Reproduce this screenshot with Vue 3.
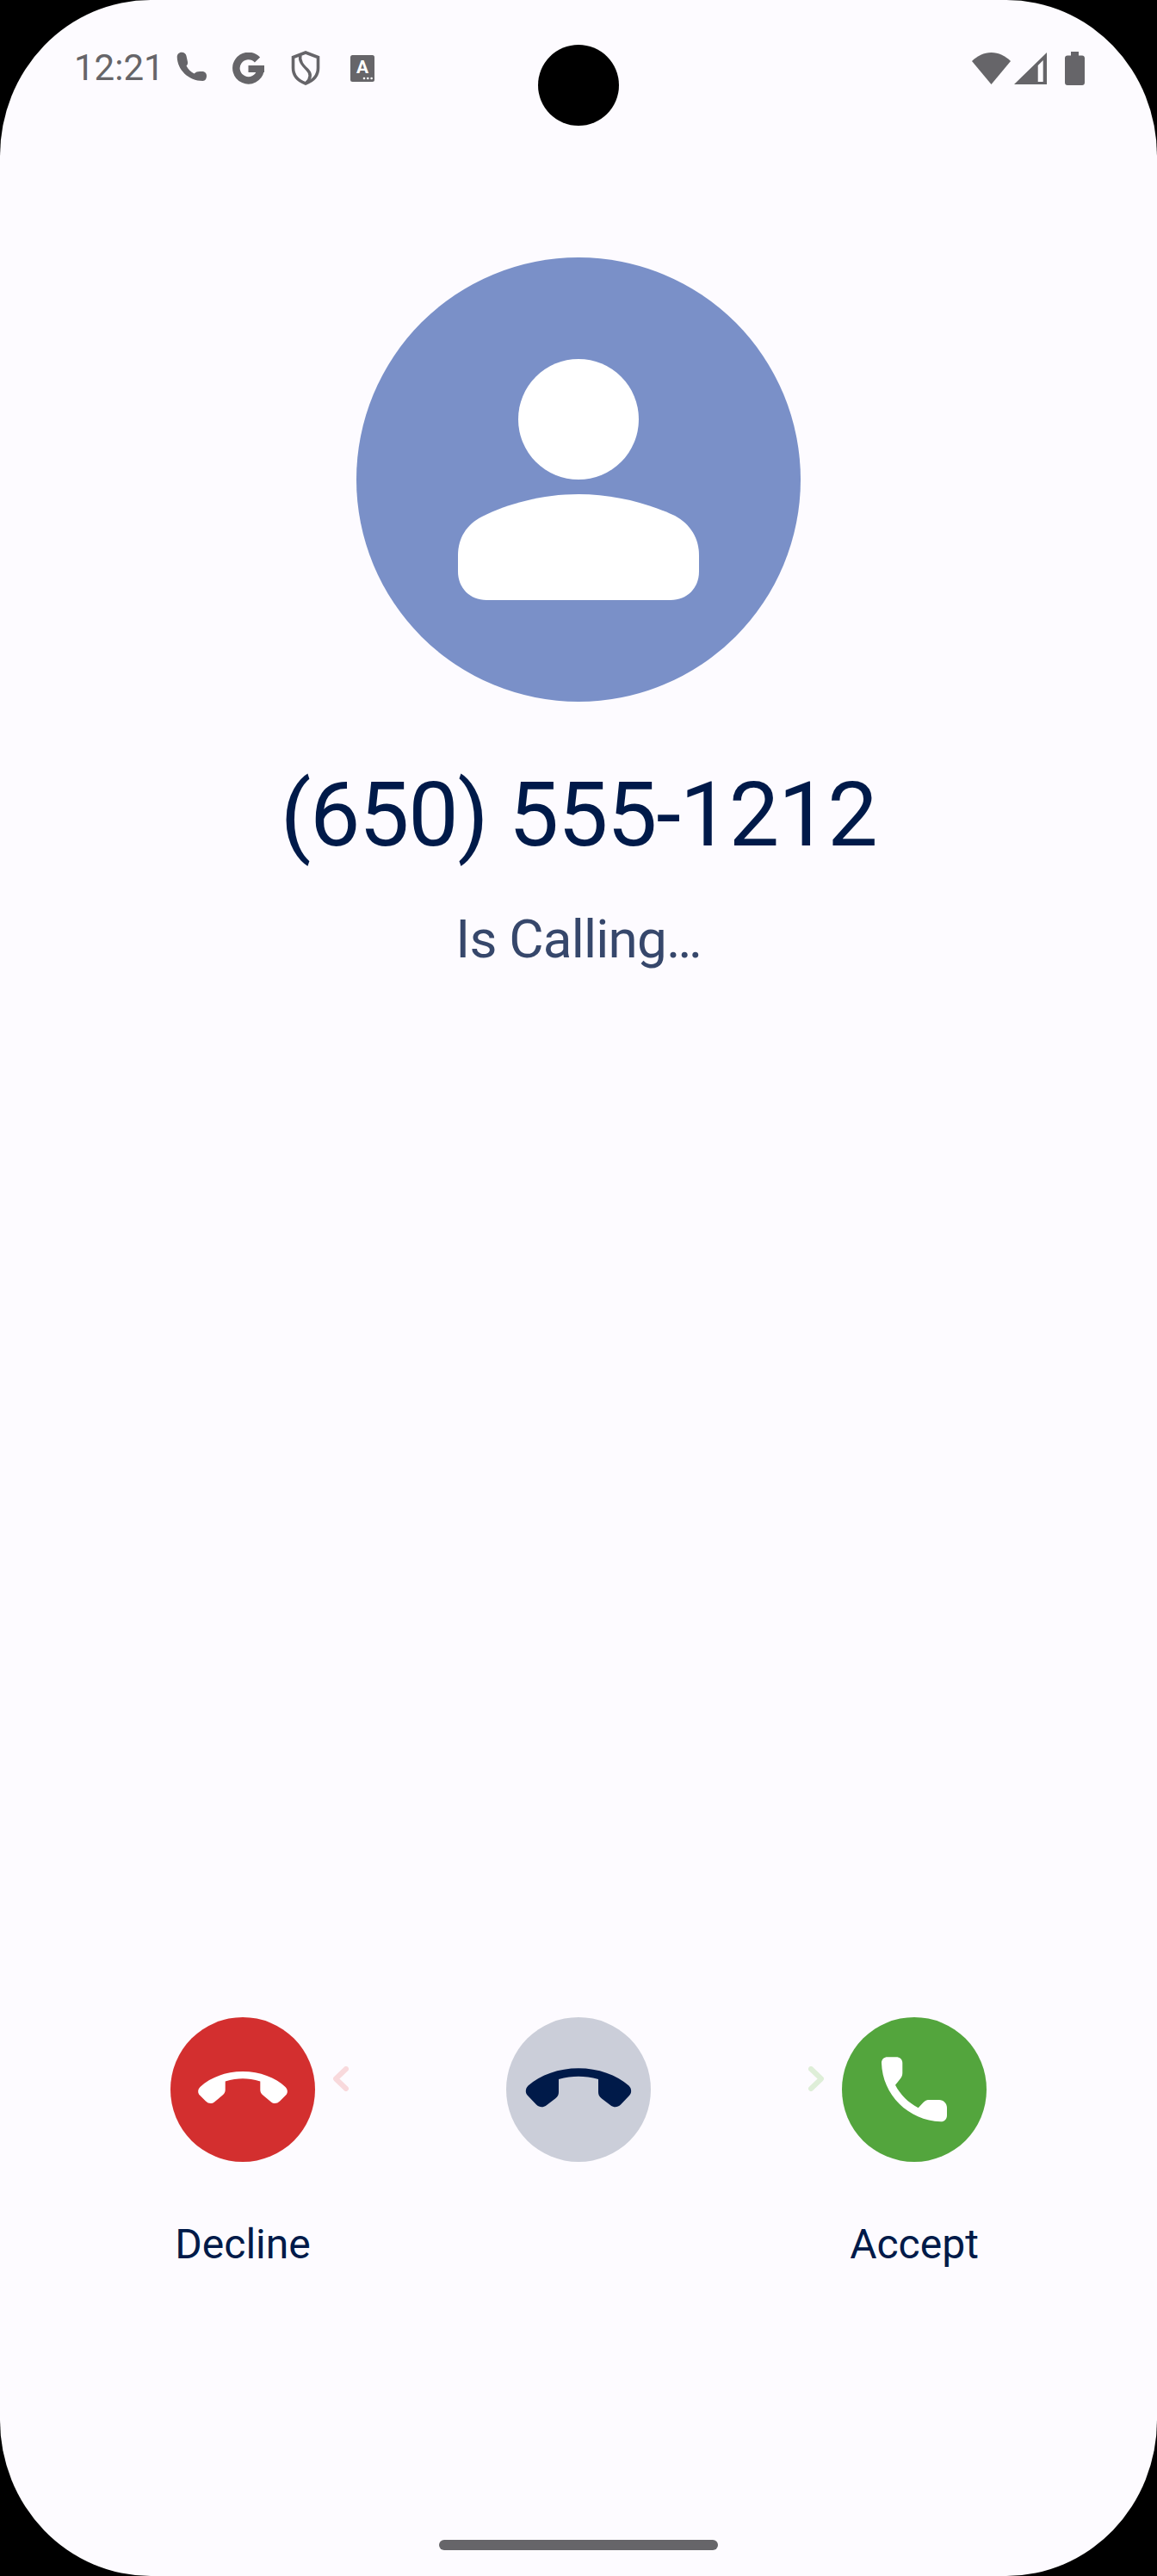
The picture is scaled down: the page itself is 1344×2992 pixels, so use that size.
<template>
  <div class="call-screen">
    <div class="call-screen__camera"></div>

    <header class="status-bar">
      <div class="status-bar__left">
        <span class="status-bar__time">12:21</span>
        <svg class="status-bar__phone" viewBox="0 0 42 42" width="42" height="42">
          <path d="M5.7 8C5.7 5 8 2.7 11 2.7C14 2.7 16 4.5 16.5 7L18 14C18.3 16 17.5 17.5 16.5 18.5C18.5 22.5 21.5 25.5 25.5 27.5C27.5 25.5 30 24.8 33 25H36C38.5 25.5 40 27.5 40 30C40 33 38.5 36 35.5 36C19 36 6 23 5.7 8Z" />
        </svg>
        <svg class="status-bar__google" viewBox="0 0 37 37" width="37" height="37">
          <path d="M29 8.5A14.2 14.2 0 1 0 32.5 21" class="status-bar__stroke" stroke-width="8.5" />
          <rect x="18.5" y="15" width="18.5" height="8" />
        </svg>
        <svg class="status-bar__shield" viewBox="0 0 34 40" width="34" height="40">
          <path d="M17 2L31.5 7.5V20C31.5 29 25 35 17 38C9 35 2.5 29 2.5 20V7.5Z" class="status-bar__stroke" stroke-width="3.6" />
          <path d="M11 5C9 12 14 17 19 22C23 26 24 31 18 37" class="status-bar__stroke" stroke-width="3.4" />
        </svg>
        <svg class="status-bar__keyboard" viewBox="0 0 28 31" width="28" height="31">
          <rect width="28" height="31" rx="2.5" />
          <text x="14" y="21" text-anchor="middle" class="status-bar__letter">A</text>
          <circle cx="16" cy="27" r="1.3" fill="#fff" />
          <circle cx="20.3" cy="27" r="1.3" fill="#fff" />
          <circle cx="24.6" cy="27" r="1.3" fill="#fff" />
        </svg>
      </div>
      <div class="status-bar__right">
        <svg viewBox="0 0 45 37" width="45" height="37">
          <path d="M0 10C6 4 14 0 22.5 0C31 0 39 4 45 10L22.5 37Z" />
        </svg>
        <svg viewBox="0 0 38 37" width="38" height="37">
          <path fill-rule="evenodd" d="M38 0V37H0ZM33.7 9L27.7 15V34H33.7Z" />
        </svg>
        <svg class="status-bar__battery" viewBox="0 0 23 39" width="23" height="39">
          <path d="M7 0H16V4.5H20C21.7 4.5 23 5.8 23 7.5V36C23 37.7 21.7 39 20 39H3C1.3 39 0 37.7 0 36V7.5C0 5.8 1.3 4.5 3 4.5H7Z" />
        </svg>
      </div>
    </header>

    <main class="caller">
      <svg class="caller__avatar" viewBox="0 0 516 516" width="516" height="516">
        <circle cx="258" cy="258" r="258" fill="#7a90c8" />
        <circle cx="258" cy="188" r="70" fill="#fff" />
        <path
          fill="#fff"
          d="M258 275C300 275 340 286 370 300C388 310 398 326 398 346V365C398 384 384 398 365 398H151C132 398 118 384 118 365V346C118 326 128 310 146 301C176 286 216 275 258 275Z"
        />
      </svg>
      <h1 class="caller__number">{{ number }}</h1>
      <p class="caller__state">Is Calling…</p>
    </main>

    <section class="actions">
      <div class="actions__item">
        <button type="button" class="actions__btn actions__btn--decline" aria-label="Decline">
          <svg viewBox="0 0 168 168" width="168" height="168">
            <path
              fill="#fff"
              d="M34.5 81C46 70 64 63 84 63C104 63 122 70 133.5 81C136.5 84 136.5 88 134 90.5L127 97.5C124 100.5 120 100.8 117 98.5L108 91C105.5 89 104.3 87 104.3 84.5V74.5C97 72 90 71.3 84 71.3C78 71.3 71 72 63.7 74.5V84.5C63.7 87 62.5 89 60 91L51 98.5C48 100.8 44 100.5 41 97.5L34 90.5C31.5 88 31.5 84 34.5 81Z"
            />
          </svg>
          <svg class="actions__chevron actions__chevron--left" viewBox="0 0 18 29" width="18" height="29">
            <path d="M15 3L3 14.5L15 26" stroke="#f8d9dc" />
          </svg>
        </button>
        <span class="actions__label">Decline</span>
      </div>

      <div class="actions__item">
        <button type="button" class="actions__btn actions__btn--idle" aria-label="Answer slider">
          <svg viewBox="0 0 168 168" width="168" height="168">
            <path
              fill="#001a49"
              d="M25.5 79.5C40 67 61 59.3 84 59.3C107 59.3 128 67 142.5 79.5C146 83 146 88 143 91L133 101.5C129.5 105 125 105 121.5 102.5L111 94.5C108 92 107 90 107 87V72C99 69.5 91 68.7 84 68.7C77 68.7 69 69.5 61 72V87C61 90 60 92 57 94.5L46.5 102.5C43 105 38.5 105 35 101.5L25 91C22 88 22 83 25.5 79.5Z"
            />
          </svg>
        </button>
      </div>

      <div class="actions__item">
        <button type="button" class="actions__btn actions__btn--accept" aria-label="Accept">
          <svg viewBox="0 0 168 168" width="168" height="168">
            <path
              fill="#fff"
              d="M46 53C46 49 49 46.3 53 46.3H63C67 46.3 70.3 49 70.3 53V65C70.3 68 69 70 67 72.5L62 78.7C68 90 77 99 88.7 105.3L94.5 99C97 96.5 99 96 102 96H113C118 96 122 100 122 105V114C122 118.5 119 121.3 115 121.3C77 120 47 90 46 53Z"
            />
          </svg>
          <svg class="actions__chevron actions__chevron--right" viewBox="0 0 18 29" width="18" height="29">
            <path d="M3 3L15 14.5L3 26" stroke="#deeed8" />
          </svg>
        </button>
        <span class="actions__label">Accept</span>
      </div>
    </section>

    <div class="home-bar"></div>
  </div>
</template>

<script setup>
const number = "(650) 555-1212";
</script>

<style scoped>
.call-screen {
  position: relative;
  display: flex;
  flex-direction: column;
  width: 1344px;
  height: 2992px;
  overflow: hidden;
  border-radius: 175px / 181px;
  background: #fdfbff;
  font-family: Roboto, sans-serif;
}

.call-screen__camera {
  position: absolute;
  top: 52px;
  left: 625px;
  width: 94px;
  height: 94px;
  border-radius: 50%;
  background: #000;
}

.status-bar {
  display: flex;
  justify-content: space-between;
  align-items: center;
  height: 40px;
  margin-top: 59px;
  padding: 0 84px 0 86px;
}

.status-bar__left,
.status-bar__right {
  display: flex;
  align-items: center;
}

.status-bar svg {
  display: block;
  flex: none;
  fill: #666569;
}

.status-bar__time {
  width: 114px;
  color: #666569;
  font-size: 42px;
  line-height: 40px;
}

.status-bar__phone {
  margin-right: 28px;
}

.status-bar__google {
  margin-right: 31px;
}

.status-bar__shield {
  margin-right: 35px;
}

.status-bar svg .status-bar__stroke {
  fill: none;
  stroke: #666569;
}

.status-bar svg .status-bar__letter {
  fill: #fff;
  font-family: Roboto, sans-serif;
  font-size: 21px;
  font-weight: 700;
}

.status-bar__right {
  gap: 4px;
}

.status-bar__battery {
  margin-left: 17px;
}

.caller {
  display: flex;
  flex-direction: column;
  align-items: center;
  margin-top: 200px;
}

.caller__avatar {
  display: block;
}

.caller__number {
  margin: 72px 0 0;
  color: #001a49;
  font-size: 104px;
  font-weight: 400;
  letter-spacing: -1.3px;
  line-height: 120px;
}

.caller__state {
  margin: 49px 0 0;
  color: #36476b;
  font-size: 62px;
  letter-spacing: -0.8px;
  line-height: 70px;
}

.actions {
  display: grid;
  grid-template-columns: repeat(3, 390px);
  justify-content: center;
  margin-top: auto;
}

.actions__item {
  display: flex;
  flex-direction: column;
  align-items: center;
}

.actions__btn {
  position: relative;
  width: 168px;
  height: 168px;
  padding: 0;
  border: none;
  border-radius: 50%;
}

.actions__btn > svg {
  display: block;
}

.actions__btn--decline {
  background: #d32f2f;
}

.actions__btn--idle {
  background: #cbced9;
}

.actions__btn--accept {
  background: #53a53d;
}

.actions__chevron {
  position: absolute;
  top: 57px;
  fill: none;
}

.actions__chevron path {
  fill: none;
  stroke-width: 6;
  stroke-linecap: round;
  stroke-linejoin: round;
}

.actions__chevron--left {
  left: 189px;
}

.actions__chevron--right {
  left: -39px;
}

.actions__label {
  margin-top: 70px;
  color: #001a49;
  font-size: 48px;
  line-height: 52px;
}

.home-bar {
  flex: none;
  width: 324px;
  height: 12px;
  margin: 317px auto 30px;
  border-radius: 6px;
  background: #666569;
}
</style>

<style>
html,
body {
  margin: 0;
  background: #000;
}
</style>
